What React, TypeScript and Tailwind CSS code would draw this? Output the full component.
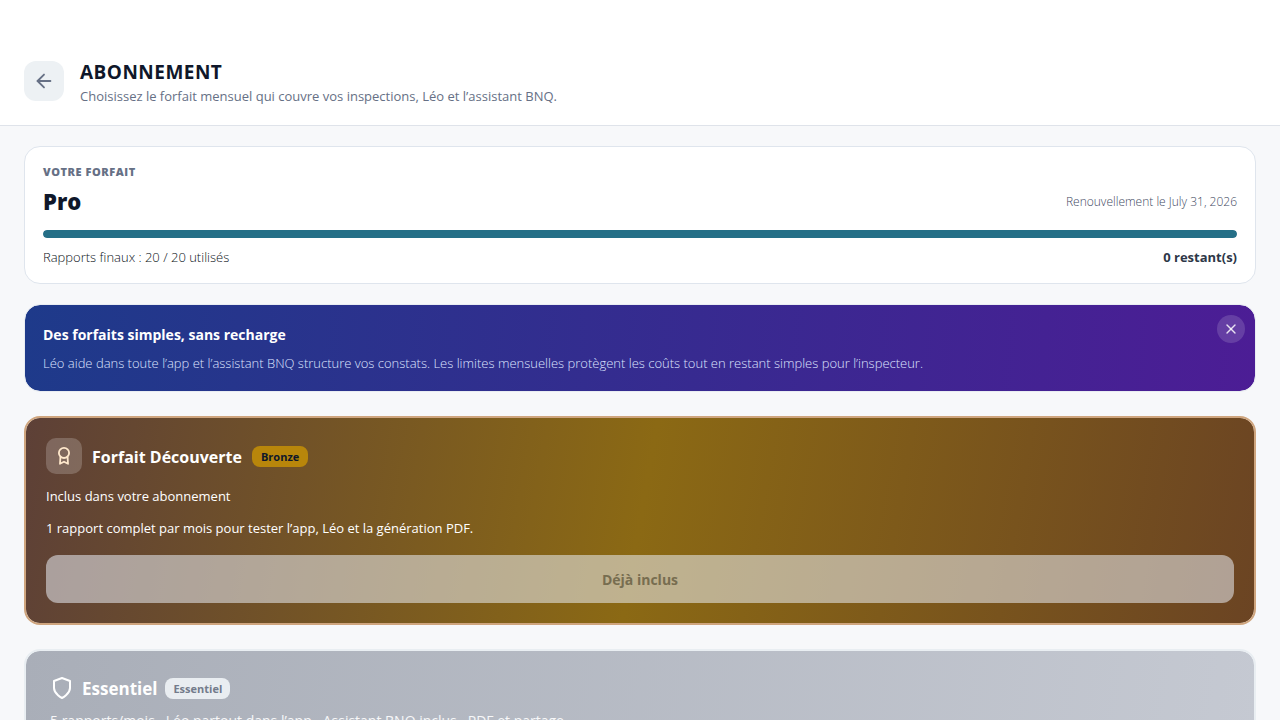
import { ArrowLeft, X } from "lucide-react";
import { FiShield } from "react-icons/fi";

function RibbonIcon() {
  return (
    <svg
      width="20"
      height="20"
      viewBox="0 0 20 20"
      fill="none"
      stroke="currentColor"
      strokeWidth="1.8"
      strokeLinecap="round"
      strokeLinejoin="round"
      aria-hidden="true"
    >
      <circle cx="10" cy="6.9" r="5.1" />
      <path d="M6.4 11.2 6 17.8 10 15.7 14 17.8 13.6 11.2" />
    </svg>
  );
}

function Header() {
  return (
    <header className="flex items-center gap-4 border-b border-[#dfe3ea] bg-white px-6 pt-14 pb-[19px]">
      <button
        type="button"
        aria-label="Retour"
        className="flex size-10 shrink-0 items-center justify-center rounded-xl bg-[#edf1f4] text-[#667085]"
      >
        <ArrowLeft size={22} />
      </button>
      <div>
        <h1 className="pt-0.5 text-[19px] leading-7 font-bold tracking-wide text-[#0f172a]">ABONNEMENT</h1>
        <p className="text-[13px] leading-5 text-[#667085]">
          Choisissez le forfait mensuel qui couvre vos inspections, Léo et l’assistant BNQ.
        </p>
      </div>
    </header>
  );
}

function CurrentPlan() {
  return (
    <section className="rounded-2xl border border-[#dfe5ed] bg-white px-[18px] pt-[18px] pb-[17px]">
      <h2 className="text-[11px] leading-[14px] font-extrabold tracking-wider text-[#667085]">VOTRE FORFAIT</h2>
      <div className="mt-1.5 flex items-center justify-between">
        <p className="text-[22px] leading-[33px] font-extrabold text-[#0f172a]">Pro</p>
        <p className="text-xs leading-4 font-light text-[#3f4a5f]">Renouvellement le July 31, 2026</p>
      </div>
      <div
        role="progressbar"
        aria-label="Rapports finaux"
        aria-valuemin={0}
        aria-valuemax={20}
        aria-valuenow={20}
        className="mt-3 h-2 overflow-hidden rounded-full bg-[#e2e8f0]"
      >
        <div className="h-full w-full rounded-full bg-[#256f87]" />
      </div>
      <div className="mt-2.5 flex justify-between text-[13px] leading-[18px]">
        <p className="font-light text-[#0b1220]">Rapports finaux : 20 / 20 utilisés</p>
        <p className="font-bold text-[#2d3748]">0 restant(s)</p>
      </div>
    </section>
  );
}

function Banner() {
  return (
    <section className="relative rounded-2xl border border-[#e9edf2] bg-linear-[94deg,#1e3a8a,#4c1d95] bg-clip-padding p-[18px]">
      <h2 className="text-sm leading-6 font-bold text-white">Des forfaits simples, sans recharge</h2>
      <p className="mt-1.5 text-[13px] leading-5 font-light text-[#dde3ff]">
        Léo aide dans toute l’app et l’assistant BNQ structure vos constats. Les limites mensuelles protègent les
        coûts tout en restant simples pour l’inspecteur.
      </p>
      <button
        type="button"
        aria-label="Fermer"
        className="absolute top-2.5 right-2.5 flex size-7 items-center justify-center rounded-full bg-white/15 text-white/85"
      >
        <X size={16} />
      </button>
    </section>
  );
}

function BronzePlan() {
  return (
    <section className="rounded-2xl border-2 border-[#cfa57e] bg-linear-[100deg,#5d4037,#8b6914,#6b4423] bg-clip-padding p-5 text-white">
      <div className="flex items-center gap-2.5">
        <span className="flex size-9 items-center justify-center rounded-[10px] bg-white/20 text-[#ffe8cc]">
          <RibbonIcon />
        </span>
        <h2 className="pt-0.5 text-base leading-6 font-bold">Forfait Découverte</h2>
        <span className="rounded-lg bg-[#b8860b] px-[9px] text-[11px] leading-[21px] font-bold text-[#0f172a]">
          Bronze
        </span>
      </div>
      <p className="mt-3 text-[13px] leading-5">Inclus dans votre abonnement</p>
      <p className="mt-3 text-[13px] leading-5">
        1 rapport complet par mois pour tester l’app, Léo et la génération PDF.
      </p>
      <button
        type="button"
        disabled
        className="mt-[17px] h-12 w-full rounded-xl bg-[#f0f5ff]/52 pt-0.5 text-sm font-bold text-[#776d50]"
      >
        Déjà inclus
      </button>
    </section>
  );
}

function EssentialPlan() {
  return (
    <section className="rounded-2xl border-2 border-[#e9eef2] bg-linear-[98deg,#a9aeb8,#c5c9d2] bg-clip-padding p-6 text-white">
      <div className="flex items-center gap-2">
        <FiShield size={24} />
        <h2 className="pt-0.5 text-[17px] leading-6 font-bold">Essentiel</h2>
        <span className="rounded-lg bg-[#e9edf1] px-2 text-[11px] leading-[21px] font-bold text-[#737b8b]">
          Essentiel
        </span>
      </div>
      <p className="mt-2 text-sm leading-6 text-white/90">
        5 rapports/mois · Léo partout dans l’app · Assistant BNQ inclus · PDF et partage
      </p>
    </section>
  );
}

export default function App() {
  return (
    <div className="h-screen overflow-hidden bg-[#f7f8fa] font-['Open_Sans','Noto_Sans',sans-serif]">
      <Header />
      <main className="flex flex-col gap-6 px-6 py-5">
        <div className="flex flex-col gap-5">
          <CurrentPlan />
          <Banner />
        </div>
        <BronzePlan />
        <EssentialPlan />
      </main>
    </div>
  );
}
